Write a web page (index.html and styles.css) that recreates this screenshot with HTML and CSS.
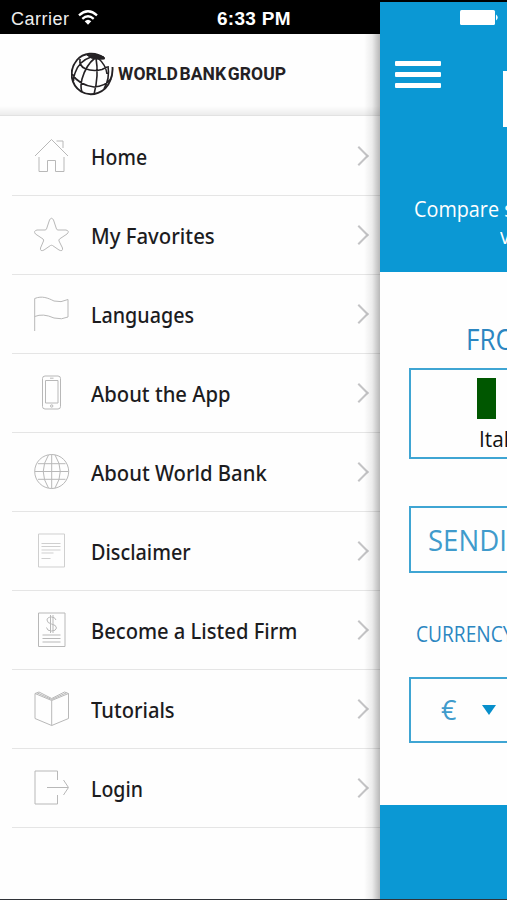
FILE: index.html
```html
<!DOCTYPE html>
<html lang="en">
<head>
<meta charset="utf-8">
<title>World Bank Group</title>
<link rel="stylesheet" href="styles.css">
</head>
<body>
<div class="app">
  <aside class="drawer">
    <div class="status">
      <span class="carrier">Carrier</span>
      <svg class="wifi" width="20" height="15" viewBox="0 0 20 15" fill="none" stroke="#fff" stroke-width="2.3"><path d="M1 5.3Q10-2.8 19 5.3M4.3 8.8Q10 3.8 15.7 8.8"/><path d="M6.7 11.3Q10 8.3 13.3 11.3L10 14.7Z" fill="#fff" stroke="none"/></svg>
      <span class="time">6:33 PM</span>
    </div>
    <header class="brand">
      <svg width="43" height="44" viewBox="0 0 43 44" fill="none" stroke="#242124" stroke-width="1.6"><path d="M33 6C24-1 12 1 6 8C-3 19 0 33 10 39.500C21 46 35 40 39 29Q42 23 41.500 15" stroke-width="1.900"/><path d="M24 6Q15 13 11 27Q9 35 11 40M25 6Q28 23 23 42.500M27 6Q35 13 36 22M37 14Q39 27 33 37M20 5Q8 9 4 21Q2.500 25 2.500 29M9 7Q8 14 14 16.500Q22 20 31 17.500L36 15M1 22Q8 33 23 35Q34 34.500 40 27"/><path d="M16 3Q24 1 33 5L33.500 7Q26 8 20 6Z" fill="#242124" stroke-width="1"/></svg>
      <span class="brand-name">WORLD BANK GROUP</span>
    </header>
    <nav class="menu">
      <a class="item"><svg class="icon" viewBox="0 0 36 36"><path d="M1 18L17.500 1.500L34 18M22.500 3H29V10M5 19V33.500H13.500V22.500H21.500V33.500H30V19"/></svg><span class="label w1">Home</span><i class="chev"></i></a>
      <a class="item"><svg class="icon" viewBox="0 0 36 36"><path d="M15.500 3Q17.500-.5 19.500 3L22.500 12Q23 13 24 13H32Q36 14 33 17L25.500 22Q24.500 23 25 24L28.500 31Q29 35 25 33L18.500 28.500Q17.500 28 16.500 28.500L10 33Q6 35 6.500 31L9.500 24Q10 23 9 22L1.500 17Q-1 14 3 13H11Q12 13 12.500 12Z"/></svg><span class="label w2">My Favorites</span><i class="chev"></i></a>
      <a class="item"><svg class="icon" viewBox="0 0 36 36"><path d="M.7 35V2.500C8-.5 14 2 20 5Q27 7 34 3.500V21Q28 24 20 22Q9 17 .7 20.500"/></svg><span class="label w3">Languages</span><i class="chev"></i></a>
      <a class="item"><svg class="icon" viewBox="0 0 36 36"><rect x="8.500" y="1" width="18" height="33" rx="2.500"/><path d="M11.500 5.500H24V28H11.500ZM16 3.200H19.500"/><circle cx="17.700" cy="31" r="1.200"/></svg><span class="label w4">About the App</span><i class="chev"></i></a>
      <a class="item"><svg class="icon" viewBox="0 0 36 36"><circle cx="17.700" cy="17.500" r="17"/><path d="M17.700 .5V34.500M.7 17.500H34.700M4 9.700H31.500M4 25.300H31.500M14.500 1Q4 17.500 14.500 34M21 1Q31.500 17.500 21 34"/></svg><span class="label w5">About World Bank</span><i class="chev"></i></a>
      <a class="item"><svg class="icon faint" viewBox="0 0 36 36"><path d="M4.500 1H30.500V34H4.500Z"/><path d="M7.500 10.500H26.500M7.500 13.500H26.500M7.500 17H26.500M7.500 20H19.500M7.500 25.500H16.500"/></svg><span class="label w6">Disclaimer</span><i class="chev"></i></a>
      <a class="item"><svg class="icon" viewBox="0 0 36 36"><path d="M4.500 1H31V34.500H4.500ZM8.500 23H26.500M8.500 26.500H26.500M8.500 30H26.500M22 8Q21 5 17.500 5Q13 5.300 13 8Q13 11 17.500 12Q22.500 13 22.500 16Q22 19 17.500 19Q13 19 12.500 15.500M16.500 3V21M19 3V21"/></svg><span class="label w7">Become a Listed Firm</span><i class="chev"></i></a>
      <a class="item"><svg class="icon" viewBox="0 0 36 36"><path d="M1 2.500L17.700 9.500L34.500 2.500V27.500L17.700 34.500L1 27.500ZM17.700 9.500V34.500M1 2.500L5 1L17.700 7.500L30.500 1L34.500 2.500M3 1.800L17.700 8.500L32.500 1.800"/></svg><span class="label w8">Tutorials</span><i class="chev"></i></a>
      <a class="item"><svg class="icon" viewBox="0 0 36 36"><path d="M23.500 10V1H1V34H23.500V25M13 17.500H34M29.500 10L34.500 17.500L29.500 25"/></svg><span class="label w9">Login</span><i class="chev"></i></a>
    </nav>
  </aside>
  <main class="page">
    <section class="hero">
      <svg class="battery" width="40" height="16" viewBox="0 0 40 16" fill="#fff"><rect width="35" height="15" rx="1.500"/><path d="M36 4.500Q39.500 7.500 36 10.500Z"/></svg>
      <div class="hero-row">
        <div class="burger"><i></i><i></i><i></i></div>
        <div class="tile"></div>
      </div>
      <p class="intro">Compare s</p>
      <p class="intro second">v</p>
    </section>
    <section class="form">
      <h2 class="from">FRO</h2>
      <div class="box country"><div class="flag"></div><span class="country-name">Ital</span></div>
      <div class="box amount"><span class="amount-text">SENDI</span></div>
      <h3 class="currency">CURRENCY</h3>
      <div class="box money"><span class="euro">€</span><i class="caret"></i></div>
    </section>
    <footer class="foot"></footer>
  </main>
</div>
</body>
</html>
```
FILE: styles.css
```css
* { box-sizing: border-box; }
body { margin: 0; font-family: "Noto Sans", sans-serif; color: #1c1c1e; background: #fff; }
.app { width: 507px; height: 900px; display: flex; overflow: hidden; background: #000; border-bottom: 1px solid #303338; }
.drawer { width: 380px; flex: none; background: #fefefe; position: relative; }
.drawer::after { content: ""; position: absolute; top: 34px; right: 0; bottom: 0; width: 16px; background: linear-gradient(to right, rgba(0,0,0,0), rgba(0,0,0,.07) 50%, rgba(0,0,0,.28)); }
.status { height: 34px; background: #000; color: #fff; display: flex; align-items: center; padding: 3px 0 0 11px; font-family: "Liberation Sans", sans-serif; font-size: 18px; line-height: 30px; }
.carrier { width: 67px; letter-spacing: .5px; color: #eee; }
.wifi { margin-top: -3px; }
.time { margin-left: 119px; font-size: 19px; font-weight: bold; white-space: nowrap; letter-spacing: .3px; }
.brand { height: 82px; display: flex; align-items: center; padding: 0 0 1px 71px; border-bottom: 1px solid #e2e2e2; background: linear-gradient(#fefefe 72px, #ececec); }
.brand-name { margin-left: 4px; font: bold 17.500px/24px Roboto, sans-serif; letter-spacing: .1px; word-spacing: -3px; color: #242124; white-space: nowrap; }
.menu { display: flex; flex-direction: column; padding: 1px 0 0 12px; }
.item { height: 79px; display: flex; align-items: center; padding: 0 14px 0 22px; border-bottom: 1px solid #e5e5e5; }
.icon { width: 36px; height: 36px; flex: none; fill: none; stroke: #b8b8b8; stroke-width: 1; }
.faint { stroke: #cfcfcf; }
.label { margin-left: 21px; font-size: 22px; line-height: 30px; font-weight: 500; white-space: nowrap; transform-origin: left; }
.w1 { transform: scaleX(.885); }
.w2 { transform: scaleX(.925); }
.w3 { transform: scaleX(.895); }
.w4 { transform: scaleX(.92); }
.w5 { transform: scaleX(.921); }
.w6 { transform: scaleX(.9); }
.w7 { transform: scaleX(.916); }
.w8 { transform: scaleX(.915); }
.w9 { transform: scaleX(.887); }
.chev { width: 14px; height: 14px; margin-left: auto; border: solid #c3c3c5; border-width: 2.500px 2.500px 0 0; transform: rotate(45deg); }
.page { width: 127px; flex: none; margin-top: 2px; display: flex; flex-direction: column; overflow: hidden; font-family: "Open Sans", sans-serif; }
.hero { height: 270px; flex: none; background: #0b98d4; color: #fff; display: flex; flex-direction: column; }
.battery { margin: 8px 0 0 80px; flex: none; }
.hero-row { display: flex; justify-content: space-between; margin-top: 35px; padding-left: 15px; height: 67px; }
.burger { width: 46px; display: flex; flex-direction: column; gap: 6px; }
.burger i { height: 5px; border-radius: 1px; background: #fff; }
.tile { width: 4px; height: 56px; margin-top: 10px; background: #fff; }
.intro { margin: 67px 0 0 34px; font-size: 22px; font-weight: 500; line-height: 27px; white-space: nowrap; transform: scaleX(.9); transform-origin: left; }
.second { margin: 0 0 0 120px; }
.form { height: 533px; flex: none; background: #fefefe; padding: 49px 0 0 28px; overflow: hidden; }
.from { margin: 0 0 11px 58px; font-size: 29px; line-height: 36px; font-weight: 400; color: #2b86c1; white-space: nowrap; transform: scaleX(.9); transform-origin: left; }
.box { width: 150px; margin-left: 1px; border: 2px solid #3fa5d3; white-space: nowrap; }
.country { height: 91px; padding: 8px 0 0 65px; }
.flag { width: 19px; height: 41px; margin-left: 1px; background: #005700; }
.country-name { display: block; margin: 4px 0 0 3px; font-size: 22px; font-weight: 500; line-height: 30px; color: #111; transform: scaleX(.94); transform-origin: left; }
.amount { height: 67px; margin-top: 47px; padding: 12px 0 0 17px; }
.amount-text { display: block; font-size: 29px; font-weight: 500; line-height: 40px; color: #409bcc; transform: scaleX(.95); transform-origin: left; }
.currency { margin: 47px 0 30px 8px; font-size: 22px; line-height: 27px; font-weight: 400; color: #2b86c1; transform: scaleX(.87); transform-origin: left; }
.money { height: 66px; display: flex; align-items: center; padding-left: 30px; }
.euro { width: 41px; font-size: 27px; line-height: 40px; color: #409bcc; }
.caret { border: solid transparent; border-width: 10px 7.500px 0; border-top-color: #078fcb; }
.foot { flex: 1; background: #0b98d4; }
```
